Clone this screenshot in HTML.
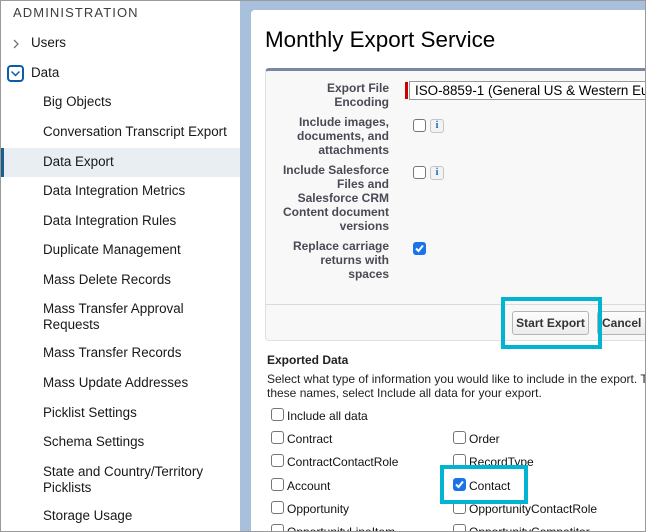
<!DOCTYPE html>
<html><head><style>
*{margin:0;padding:0;box-sizing:border-box}
html,body{width:646px;height:532px;overflow:hidden}
body{position:relative;font-family:"Liberation Sans",Arial,sans-serif;background:#fff}
.frame{position:absolute;left:0;top:0;width:646px;height:532px;border:1px solid #9a9a9a;z-index:50;pointer-events:none}
.side{position:absolute;left:0;top:0;width:240px;height:532px;background:#fff}
.s{position:absolute;font-size:13.4px;color:#181818;line-height:16px;white-space:nowrap}
.bg{position:absolute;left:240px;top:0;width:406px;height:532px;background:#a9c0dc}
.card{position:absolute;left:251px;top:10px;width:395px;height:522px;background:#fff;border-radius:4px 0 0 0}
.t{position:absolute;white-space:nowrap}
.lab{position:absolute;right:257px;text-align:right;font-weight:bold;font-size:12px;color:#4a4a56;line-height:14px}
.cb{position:absolute;width:13px;height:13px;border:1px solid #767676;border-radius:3px;background:#fff}
.cbk{position:absolute;width:13px;height:13px;border-radius:3px;background:#1a73e8}
.info{position:absolute;width:14px;height:14px;border:1px solid #c5c5c5;border-radius:3px;background:#f3f3f3;color:#1565c0;font-size:10px;font-weight:bold;text-align:center;line-height:12px;font-family:"Liberation Serif",serif}
.it{position:absolute;font-size:12px;color:#111;white-space:nowrap}
.hl{position:absolute;border:4px solid #00b4d2}
</style></head><body>
<div class="side">
<div class="s" style="left:13px;top:5px;font-size:13px;letter-spacing:1.1px;color:#3e3e3c">ADMINISTRATION</div>
<svg style="position:absolute;left:11px;top:38px" width="10" height="12"><path d="M3 2 L7 6 L3 10" fill="none" stroke="#747474" stroke-width="1.3"/></svg>
<div class="s" style="left:31px;top:35px">Users</div>
<div style="position:absolute;left:7px;top:65px;width:17px;height:17px;border:2px solid #0b5cab;border-radius:4px"></div>
<svg style="position:absolute;left:9px;top:67px" width="13" height="13"><path d="M2.5 4.5 L6.5 8.5 L10.5 4.5" fill="none" stroke="#0b5cab" stroke-width="1.5"/></svg>
<div class="s" style="left:31px;top:65px">Data</div>
<div class="s" style="left:43px;top:94px">Big Objects</div>
<div class="s" style="left:43px;top:124px">Conversation Transcript Export</div>
<div style="position:absolute;left:0;top:148px;width:240px;height:29px;background:#e8eef2"></div>
<div style="position:absolute;left:1px;top:148px;width:3px;height:29px;background:#1b5f8f"></div>
<div class="s" style="left:43px;top:154px">Data Export</div>
<div class="s" style="left:43px;top:183px">Data Integration Metrics</div>
<div class="s" style="left:43px;top:213px">Data Integration Rules</div>
<div class="s" style="left:43px;top:242px">Duplicate Management</div>
<div class="s" style="left:43px;top:272px">Mass Delete Records</div>
<div class="s" style="left:43px;top:301px">Mass Transfer Approval<br>Requests</div>
<div class="s" style="left:43px;top:345px">Mass Transfer Records</div>
<div class="s" style="left:43px;top:375px">Mass Update Addresses</div>
<div class="s" style="left:43px;top:405px">Picklist Settings</div>
<div class="s" style="left:43px;top:434px">Schema Settings</div>
<div class="s" style="left:43px;top:464px">State and Country/Territory<br>Picklists</div>
<div class="s" style="left:43px;top:508px">Storage Usage</div>
</div>
<div class="bg"></div>
<div class="card"></div>
<div class="t" style="left:265px;top:27px;font-size:22.4px;color:#000">Monthly Export Service</div>
<div style="position:absolute;left:265px;top:68px;width:381px;height:273px;background:#f8f8f8;border:1px solid #e0e0e0;border-top:3px solid #7a879e;border-radius:4px 0 0 4px"></div>
<div style="position:absolute;left:266px;top:304px;width:380px;height:1px;background:#dadada"></div>
<div class="lab" style="top:81px">Export File<br>Encoding</div>
<div style="position:absolute;left:405px;top:82px;width:3px;height:17px;background:#c00"></div>
<div style="position:absolute;left:409px;top:81px;width:240px;height:19px;border:1px solid #999;background:#fff;font-size:13.4px;line-height:17px;padding-left:5px;white-space:nowrap;color:#000">ISO-8859-1 (General US &amp; Western Eu</div>
<div class="lab" style="top:115px">Include images,<br>documents, and<br>attachments</div>
<div class="cb" style="left:413px;top:119px"></div><div class="info" style="left:430px;top:119px">i</div>
<div class="lab" style="top:163px">Include Salesforce<br>Files and<br>Salesforce CRM<br>Content document<br>versions</div>
<div class="cb" style="left:413px;top:166px"></div><div class="info" style="left:430px;top:166px">i</div>
<div class="lab" style="top:239px">Replace carriage<br>returns with<br>spaces</div>
<div class="cbk" style="left:413px;top:242px"></div>
<svg style="position:absolute;left:413px;top:242px" width="13" height="13"><path d="M3 6.5 L5.5 9 L10 3.5" fill="none" stroke="#fff" stroke-width="2"/></svg>
<div style="position:absolute;left:512px;top:311px;width:77px;height:24px;border:1px solid #b5b5b5;border-radius:3px;background:linear-gradient(#fdfdfd,#ececec);font-size:12px;font-weight:bold;color:#333;text-align:center;line-height:22px">Start Export</div>
<div style="position:absolute;left:597px;top:311px;width:50px;height:24px;border:1px solid #b5b5b5;border-radius:3px;background:linear-gradient(#fdfdfd,#ececec);font-size:12px;font-weight:bold;color:#333;padding-left:4px;line-height:22px">Cancel</div>
<div class="hl" style="left:501px;top:297px;width:101px;height:52px"></div>
<div class="t" style="left:267px;top:353px;font-size:12px;font-weight:bold;color:#222">Exported Data</div>
<div class="t" style="left:267px;top:372px;font-size:12px;color:#222;line-height:14px">Select what type of information you would like to include in the export. T<br>these names, select Include all data for your export.</div>
<div class="cb" style="left:271px;top:408px"></div><div class="it" style="left:287px;top:409px">Include all data</div>
<div class="cb" style="left:271px;top:431px"></div><div class="it" style="left:287px;top:432px">Contract</div>
<div class="cb" style="left:271px;top:454px"></div><div class="it" style="left:287px;top:455px">ContractContactRole</div>
<div class="cb" style="left:271px;top:478px"></div><div class="it" style="left:287px;top:479px">Account</div>
<div class="cb" style="left:271px;top:501px"></div><div class="it" style="left:287px;top:502px">Opportunity</div>
<div class="cb" style="left:271px;top:524px"></div><div class="it" style="left:287px;top:525px">OpportunityLineItem</div>
<div class="cb" style="left:453px;top:431px"></div><div class="it" style="left:469px;top:432px">Order</div>
<div class="cb" style="left:453px;top:454px"></div><div class="it" style="left:469px;top:455px">RecordType</div>
<div class="cbk" style="left:453px;top:478px"></div>
<svg style="position:absolute;left:453px;top:478px" width="13" height="13"><path d="M3 6.5 L5.5 9 L10 3.5" fill="none" stroke="#fff" stroke-width="2"/></svg>
<div class="it" style="left:469px;top:479px">Contact</div>
<div class="cb" style="left:453px;top:501px"></div><div class="it" style="left:469px;top:502px">OpportunityContactRole</div>
<div class="cb" style="left:453px;top:524px"></div><div class="it" style="left:469px;top:525px">OpportunityCompetitor</div>
<div class="hl" style="left:440px;top:465px;width:88px;height:39px"></div>
<div class="frame"></div>
</body></html>
